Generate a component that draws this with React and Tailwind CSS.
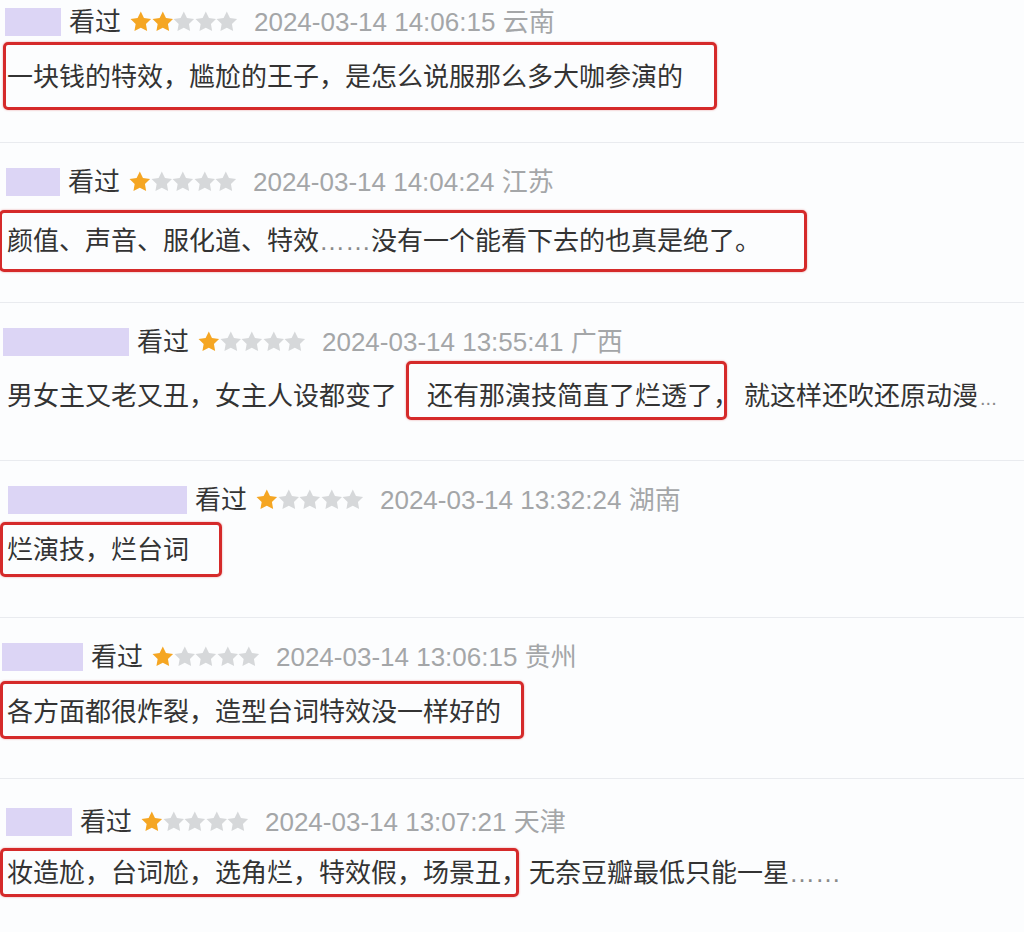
import React from "react";

const Star = ({ on }) => (
  <svg viewBox="1.5 1.5 21 21" className="w-[21.6px] h-[21.6px] shrink-0">
    <path
      d="M12 2l3.09 6.26L22 9.27l-5 4.87 1.18 6.88L12 17.77l-6.18 3.25L7 14.14 2 9.27l6.91-1.01L12 2z"
      fill={on ? "#f5a623" : "#d6d8da"}
    />
  </svg>
);

// red annotation frame drawn over the highlighted words
const Mark = ({ box, className = "", children }) => (
  <span className={"relative inline-block " + className}>
    {children}
    <span
      className={
        "pointer-events-none absolute border-[3px] border-[#d52a2a] rounded-[5px] shadow-[0_0_2px_rgba(213,42,42,0.5)] " +
        box
      }
    />
  </span>
);

const Dots = ({ children }) => <span className="text-[#8a8a8a]">{children}</span>;

const reviews = [
  {
    item: "-mt-[17px] h-[160px] pt-[24px]",
    block: "ml-[5px] w-[56px]",
    stars: 2,
    date: "2024-03-14 14:06:15 云南",
    line: "mt-[22px]",
    body: (
      <Mark box="-left-[4px] -right-[34px] -top-[17px] -bottom-[15px]">
        一块钱的特效，尴尬的王子，是怎么说服那么多大咖参演的
      </Mark>
    ),
  },
  {
    item: "h-[160px] pt-[24px]",
    block: "ml-[6px] w-[54px]",
    stars: 1,
    date: "2024-03-14 14:04:24 江苏",
    line: "mt-[26px]",
    body: (
      <Mark box="-left-[8px] -right-[46px] -top-[13px] -bottom-[13px]">
        颜值、声音、服化道、特效<Dots>……</Dots>没有一个能看下去的也真是绝了。
      </Mark>
    ),
  },
  {
    item: "h-[158px] pt-[24px]",
    block: "ml-[3px] w-[126px]",
    stars: 1,
    date: "2024-03-14 13:55:41 广西",
    line: "mt-[21px]",
    body: (
      <>
        <span>男女主又老又丑，女主人设都变了</span>
        <Mark className="ml-[30px]" box="-left-[21px] right-[12px] -top-[17px] -bottom-[6px]">
          还有那演技简直了烂透了，
        </Mark>
        <span className="ml-[5px]">就这样还吹还原动漫</span>
        <span className="ml-[2px] text-[20px] text-[#8a8a8a]">...</span>
      </>
    ),
  },
  {
    item: "h-[157px] pt-[24px]",
    block: "ml-[8px] w-[179px]",
    stars: 1,
    date: "2024-03-14 13:32:24 湖南",
    line: "mt-[17px]",
    body: (
      <Mark box="-left-[7px] -right-[33px] -top-[10px] -bottom-[9px]">烂演技，烂台词</Mark>
    ),
  },
  {
    item: "h-[161px] pt-[24px]",
    block: "ml-[2px] w-[81px]",
    stars: 1,
    date: "2024-03-14 13:06:15 贵州",
    line: "mt-[22px]",
    body: (
      <Mark box="-left-[7px] -right-[23px] -top-[13px] -bottom-[9px]">
        各方面都很炸裂，造型台词特效没一样好的
      </Mark>
    ),
  },
  {
    item: "flex-1 pt-[28px]",
    block: "ml-[6px] w-[66px]",
    stars: 1,
    date: "2024-03-14 13:07:21 天津",
    line: "mt-[18px]",
    body: (
      <>
        <Mark box="-left-[7px] right-[8px] -top-[7px] -bottom-[6px]">
          妆造尬，台词尬，选角烂，特效假，场景丑，
        </Mark>
        <span className="ml-[2px]">
          无奈豆瓣最低只能一星<Dots>……</Dots>
        </span>
      </>
    ),
  },
];

export default function App() {
  return (
    <div className="w-[1024px] h-[932px] overflow-hidden bg-[#fcfdfe] flex flex-col font-['Liberation_Sans','Noto_Sans_CJK_SC',sans-serif]">
      {reviews.map((r, i) => (
        <div
          key={i}
          className={"shrink-0 flex flex-col border-b border-[#e9ebef] last:border-b-0 " + r.item}
        >
          <div className="flex items-center h-[30px] whitespace-nowrap">
            <div className={"h-[28px] bg-[#dcd5f5] " + r.block} />
            <span className="ml-[8px] text-[26px] leading-none text-[#353535]">看过</span>
            <div className="ml-[9px] flex items-center">
              {[0, 1, 2, 3, 4].map((s) => (
                <Star key={s} on={s < r.stars} />
              ))}
            </div>
            <span className="ml-[16px] text-[26px] leading-none text-[#a4a6a8]">{r.date}</span>
          </div>
          <div
            className={
              "h-[36px] pl-[7px] text-[26px] leading-[36px] text-[#333] whitespace-nowrap " + r.line
            }
          >
            {r.body}
          </div>
        </div>
      ))}
    </div>
  );
}
